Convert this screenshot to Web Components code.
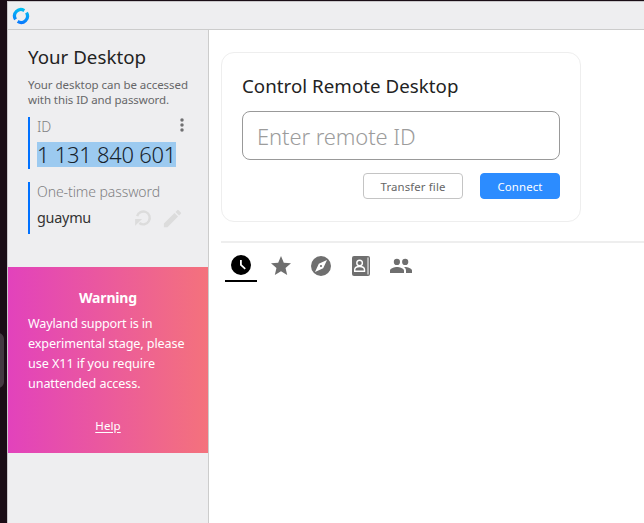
<!DOCTYPE html>
<html lang="en"><head><meta charset="utf-8"><title>Remote desktop</title>
<style>html,body{margin:0;height:100%;overflow:hidden}body{font-family:"Noto Sans","Open Sans",sans-serif;background:#1a0d16}</style></head>
<body><desk-app></desk-app>
<script>
const define=(name,html,init)=>{
  const t=document.createElement('template');t.innerHTML=html;
  customElements.define(name,class extends HTMLElement{
    constructor(){super();this.attachShadow({mode:'open'}).append(t.content.cloneNode(true));}
    connectedCallback(){if(init)init(this,this.shadowRoot);}
  });
};
// One line of text, tracked so that it spans the width given in "w".
define('fit-text',`<style>:host{display:block;white-space:nowrap}span{display:inline-block;white-space:pre;text-decoration:inherit;text-underline-offset:inherit}</style><span><slot></slot></span>`,(el,r)=>{
  const s=r.querySelector('span'),w=parseFloat(el.getAttribute('w')),n=el.textContent.length;
  const d=(w-s.getBoundingClientRect().width)/n;
  s.style.letterSpacing=d+'px';
});
const icons={
  logo:`<defs><linearGradient id="g" gradientUnits="userSpaceOnUse" x1="14" y1="1" x2="10" y2="23"><stop stop-color="#00c4f0"/><stop offset="1" stop-color="#0a74ff"/></linearGradient></defs><path d="M16.4 4.7A8.5 8.5 0 0 0 4.7 16.4M7.6 19.3A8.5 8.5 0 0 0 19.3 7.6" fill="none" stroke="url(#g)" stroke-width="4.3"/>`,
  more:`<circle cx="12" cy="4.5" r="2.6"/><circle cx="12" cy="12" r="2.6"/><circle cx="12" cy="19.5" r="2.6"/>`,
  refresh:`<path d="M5.6 10A7 7 0 1 1 8 17.4" fill="none" stroke="currentColor" stroke-width="2.6"/><path d="M3.4 13H11L3.4 20.4z"/>`,
  edit:`<path d="M3 17.25V21h3.75L17.81 9.94l-3.75-3.75L3 17.25zM20.71 7.04a1 1 0 0 0 0-1.41l-2.34-2.34a1 1 0 0 0-1.41 0l-1.83 1.83 3.75 3.75 1.83-1.83z"/>`,
  clock:`<path fill-rule="evenodd" d="M12 2a10 10 0 1 0 0 20 10 10 0 0 0 0-20zm3.7 14.5L11 12.2V7h1.8v4.4l4 3.8z"/>`,
  star:`<path d="M12 17.27 18.18 21l-1.64-7.03L22 9.24l-7.19-.61L12 2 9.19 8.63 2 9.24l5.46 4.73L5.82 21z"/>`,
  compass:`<path fill-rule="evenodd" d="M12 10.9a1.1 1.1 0 1 0 0 2.2 1.1 1.1 0 0 0 0-2.2zM12 2a10 10 0 1 0 0 20 10 10 0 0 0 0-20zm2.19 12.19L6 18l3.81-8.19L18 6z"/>`,
  book:`<rect x="3" y="2" width="18" height="20" rx="2"/><g fill="none" stroke="#fff" stroke-width="1.4"><path d="M19 3.5v17" stroke-width="1"/><circle cx="10.6" cy="9" r="2.8"/><path d="M5.7 17.2v-1.4c0-2 1.9-3.3 4.9-3.3s4.9 1.3 4.9 3.3v1.4z"/></g>`,
  people:`<path d="M16.2 11a3.1 3.1 0 1 0 0-6.2 3.1 3.1 0 0 0 0 6.2zm-8.3 0a3.1 3.1 0 1 0 0-6.2 3.1 3.1 0 0 0 0 6.2zM8 13c-2.3 0-7 1.2-7 3.5V19h14v-2.5C15 14.2 10.3 13 8 13zm8 0-1 .05c1.2.84 2 1.97 2 3.45V19h6v-2.5c0-2.3-4.7-3.5-7-3.5z"/>`
};
define('ui-icon',`<style>:host{display:block;width:24px;height:24px;flex:none}svg{display:block;width:100%;height:100%;fill:currentColor}</style><svg viewBox="0 0 24 24"></svg>`,(el,r)=>{r.querySelector('svg').innerHTML=icons[el.getAttribute('name')];});
define('accent-block',`<style>:host{display:block;box-sizing:border-box;height:52px;border-left:2px solid #0071ff;padding-left:7px}</style><slot></slot>`);
define('warning-card',`<style>:host{display:flex;flex-direction:column;height:186px;box-sizing:border-box;padding:21px 20px 0;background:linear-gradient(90deg,#e242bc,#f4727c);color:#fff;font-size:12.6px;line-height:20px}
.t{font-size:14px;font-weight:700;align-self:center;margin-bottom:6px}.h{font-size:11.5px;line-height:16px;margin-top:24px;align-self:center;text-decoration:underline;text-underline-offset:2px}</style>
<fit-text class="t" w="58">Warning</fit-text><fit-text w="124.5">Wayland support is in</fit-text><fit-text w="156.5">experimental stage, please</fit-text><fit-text w="127">use X11 if you require</fit-text><fit-text w="112.5">unattended access.</fit-text><fit-text class="h" w="25.5">Help</fit-text>`);
define('side-panel',`<style>:host{display:block;width:200px;flex:none;box-sizing:content-box;padding-top:15px;background:#eeeef0;border-right:1px solid #ccc}
.p{padding:0 20px}.title{font-size:18.7px;line-height:24px;color:#222}.d{font-size:11.5px;line-height:15px;color:#666668}.title+.d{margin-top:8px}
accent-block{margin-top:10px}accent-block+accent-block{margin-top:13px}.l{font-size:14px;line-height:20px;color:#808082;font-weight:300}.row{display:flex;justify-content:space-between}
.id{background:#9ccaf0;width:139px;height:25px;margin-top:5px;line-height:26px;font-size:21.9px;color:#17232c;font-weight:300}
.more{width:16px;height:16px;color:#707072;margin-right:-2px}.pw{margin-top:5px;display:flex;align-items:center;color:#dcdcdc;height:20px}
.v{font-size:14.4px;line-height:20px;margin-top:2px;color:#333;flex:1}.r{width:22px;height:22px;margin:2px 7px 0 0}.e{width:23px;height:23px;margin:2px 4px 0 0}warning-card{margin-top:33px}</style>
<div class="p"><fit-text class="title" w="118">Your Desktop</fit-text><fit-text class="d" w="160">Your desktop can be accessed</fit-text><fit-text class="d" w="141">with this ID and password.</fit-text>
<accent-block><div class="row"><fit-text class="l" w="14">ID</fit-text><ui-icon class="more" name="more"></ui-icon></div><fit-text class="id" w="139">1 131 840 601</fit-text></accent-block>
<accent-block><fit-text class="l" w="123">One-time password</fit-text><div class="pw"><fit-text class="v" w="54">guaymu</fit-text><ui-icon class="r" name="refresh"></ui-icon><ui-icon class="e" name="edit"></ui-icon></div></accent-block></div>
<warning-card></warning-card>`);
define('ui-button',`<style>:host{display:flex;box-sizing:border-box;height:26px;align-items:center;justify-content:center;border:1px solid #c4c4c4;border-radius:4px;font-size:11.4px;color:#666}:host([primary]){background:#2c8cff;border-color:#2c8cff;color:#fff}</style><slot></slot>`);
define('remote-card',`<style>:host{display:block;box-sizing:border-box;width:360px;height:170px;border:1px solid #eee;border-radius:13px;padding:21px 20px}
.t{font-size:18.7px;line-height:24px;color:#222}.in{box-sizing:border-box;height:49px;width:318px;margin-top:13px;border:1px solid #999;border-radius:8px;padding:0 14px;font-size:22px;line-height:49px;color:#9c9c9c;font-weight:300}
.b{display:flex;gap:17px;justify-content:flex-end;margin-top:13px}.a{width:100px}.c{width:80px}</style>
<fit-text class="t" w="216.5">Control Remote Desktop</fit-text><div class="in"><fit-text w="158.5">Enter remote ID</fit-text></div><div class="b"><ui-button class="a"><fit-text w="65">Transfer file</fit-text></ui-button><ui-button class="c" primary><fit-text w="45">Connect</fit-text></ui-button></div>`);
define('tab-icon',`<style>:host{display:block;box-sizing:border-box;width:32px;height:39px;padding:10px 4px 0;color:#6f6f6f}:host([active]){color:#000;border-bottom:2px solid #000}</style><slot></slot>`);
define('peer-tabs',`<style>:host{display:flex;gap:8px;border-top:2px solid #eee;margin-top:19px;padding-left:4px}.c{margin-top:1px}</style><tab-icon active><ui-icon name="clock"></ui-icon></tab-icon><tab-icon><ui-icon class="c" name="star"></ui-icon></tab-icon><tab-icon><ui-icon class="c" name="compass"></ui-icon></tab-icon><tab-icon><ui-icon class="c" name="book"></ui-icon></tab-icon><tab-icon><ui-icon class="c" name="people"></ui-icon></tab-icon>`);
define('desk-app',`<style>:host{display:block;box-sizing:border-box;height:523px;padding:1px 0 0 7px;background:#1a0d16;position:relative}
.w{box-sizing:border-box;height:522px;border:1px solid #c9c7ca;border-width:1px 0 0 1px;background:#fff;display:flex;flex-direction:column}
.bar{height:27px;background:#eeeef0;border-bottom:1px solid #ccc;padding-left:4px;display:flex;align-items:center}.bar ui-icon{width:18px;height:18px}
.m{flex:1;display:flex;min-height:0}main{flex:1;padding:22px 0 0 12px}.handle{position:absolute;left:-8px;top:333px;width:12px;height:55px;border-radius:6px;background:#443942}</style>
<div class="handle"></div><div class="w"><div class="bar"><ui-icon name="logo"></ui-icon></div><div class="m"><side-panel></side-panel><main><remote-card></remote-card><peer-tabs></peer-tabs></main></div></div>`);
</script></body></html>
